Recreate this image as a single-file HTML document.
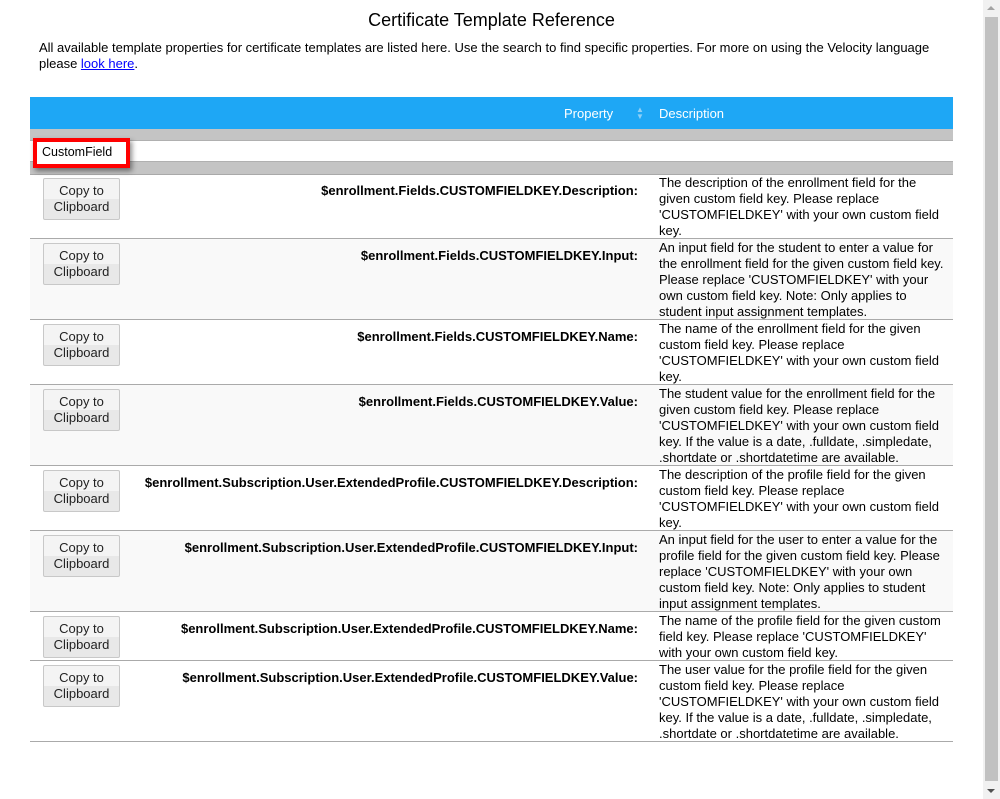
<!DOCTYPE html>
<html><head><meta charset="utf-8"><style>
body{margin:0;width:1000px;height:799px;overflow:hidden;background:#fff;font-family:"Liberation Sans",Arial,sans-serif;color:#000;position:relative}
.sb{position:absolute;left:983px;top:0;width:17px;height:799px;background:#f1f1f1}
.thumb{position:absolute;left:2px;top:17px;width:13px;height:764px;background:#c1c1c1}
.au{position:absolute;left:4px;top:6px;width:0;height:0;border-left:4px solid transparent;border-right:4px solid transparent;border-bottom:4px solid #a3a3a3}
.ad{position:absolute;left:4px;bottom:6px;width:0;height:0;border-left:4px solid transparent;border-right:4px solid transparent;border-top:4px solid #505050}
h1{position:absolute;left:0;width:983px;top:10px;margin:0;text-align:center;font-size:18px;font-weight:normal}
.intro{position:absolute;left:39px;top:40px;width:905px;font-size:13px;line-height:16px}
.intro a{color:#00f;text-decoration:underline}
.hdr{position:absolute;left:30px;top:97px;width:923px;height:32px;background:#1ea7f5;color:#fff;font-size:13px}
.g1{position:absolute;left:30px;top:129px;width:923px;height:11px;background:#c4c4c4;border-bottom:1px solid #b0b0b0}
.inrow{position:absolute;left:30px;top:141px;width:923px;height:20px;background:#fff}
.g2{position:absolute;left:30px;top:161px;width:923px;height:12px;background:#c4c4c4;border-top:1px solid #b0b0b0;border-bottom:1px solid #a9a9a9}
.sel{position:absolute;left:33px;top:138px;width:89px;height:22px;border:4px solid #f00;box-shadow:2px 3px 5px rgba(0,0,0,.45);background:#fff}
.sel span{position:absolute;left:5px;top:3px;font-size:12.5px}
.row{position:absolute;left:30px;width:923px;border-bottom:1px solid #aaa}
.alt{background:#f9f9f9}
.btn{position:absolute;left:13px;top:4px;border:1px solid #c8c8c8;border-radius:2px;background:linear-gradient(#f4f4f4 50%,#e8e8e8 50%);font-size:13px;line-height:16px;text-align:center;color:#222;padding-top:4px;box-sizing:border-box;height:42px;width:77px}
.prop{position:absolute;right:315px;top:9px;font-size:13px;font-weight:bold;white-space:nowrap;letter-spacing:0}
.desc{position:absolute;left:629px;top:1px;width:290px;font-size:13px;line-height:16px}
</style></head><body>
<h1>Certificate Template Reference</h1>
<div class="intro">All available template properties for certificate templates are listed here. Use the search to find specific properties. For more on using the Velocity language please <a>look here</a>.</div>
<div class="hdr"><span style="position:absolute;left:534px;top:9px">Property</span><span style="position:absolute;left:606px;top:9px;font-size:8px;line-height:7px;color:#8fd0f7">▲<br>▼</span><span style="position:absolute;left:629px;top:9px">Description</span></div>
<div class="g1"></div><div class="inrow"></div><div class="g2"></div>
<div class="sel"><span>CustomField</span></div>

<div class="row" style="top:174px;height:64px"><div class="btn">Copy to<br>Clipboard</div><div class="prop">$enrollment.Fields.CUSTOMFIELDKEY.Description:</div><div class="desc">The description of the enrollment field for the given custom field key. Please replace 'CUSTOMFIELDKEY' with your own custom field key.</div></div>
<div class="row alt" style="top:239px;height:80px"><div class="btn">Copy to<br>Clipboard</div><div class="prop">$enrollment.Fields.CUSTOMFIELDKEY.Input:</div><div class="desc">An input field for the student to enter a value for the enrollment field for the given custom field key. Please replace 'CUSTOMFIELDKEY' with your own custom field key. Note: Only applies to student input assignment templates.</div></div>
<div class="row" style="top:320px;height:64px"><div class="btn">Copy to<br>Clipboard</div><div class="prop">$enrollment.Fields.CUSTOMFIELDKEY.Name:</div><div class="desc">The name of the enrollment field for the given custom field key. Please replace 'CUSTOMFIELDKEY' with your own custom field key.</div></div>
<div class="row alt" style="top:385px;height:80px"><div class="btn">Copy to<br>Clipboard</div><div class="prop">$enrollment.Fields.CUSTOMFIELDKEY.Value:</div><div class="desc">The student value for the enrollment field for the given custom field key. Please replace 'CUSTOMFIELDKEY' with your own custom field key. If the value is a date, .fulldate, .simpledate, .shortdate or .shortdatetime are available.</div></div>
<div class="row" style="top:466px;height:64px"><div class="btn">Copy to<br>Clipboard</div><div class="prop">$enrollment.Subscription.User.ExtendedProfile.CUSTOMFIELDKEY.Description:</div><div class="desc">The description of the profile field for the given custom field key. Please replace 'CUSTOMFIELDKEY' with your own custom field key.</div></div>
<div class="row alt" style="top:531px;height:80px"><div class="btn">Copy to<br>Clipboard</div><div class="prop">$enrollment.Subscription.User.ExtendedProfile.CUSTOMFIELDKEY.Input:</div><div class="desc">An input field for the user to enter a value for the profile field for the given custom field key. Please replace 'CUSTOMFIELDKEY' with your own custom field key. Note: Only applies to student input assignment templates.</div></div>
<div class="row" style="top:612px;height:48px"><div class="btn">Copy to<br>Clipboard</div><div class="prop">$enrollment.Subscription.User.ExtendedProfile.CUSTOMFIELDKEY.Name:</div><div class="desc">The name of the profile field for the given custom field key. Please replace 'CUSTOMFIELDKEY' with your own custom field key.</div></div>
<div class="row" style="top:661px;height:80px"><div class="btn">Copy to<br>Clipboard</div><div class="prop">$enrollment.Subscription.User.ExtendedProfile.CUSTOMFIELDKEY.Value:</div><div class="desc">The user value for the profile field for the given custom field key. Please replace 'CUSTOMFIELDKEY' with your own custom field key. If the value is a date, .fulldate, .simpledate, .shortdate or .shortdatetime are available.</div></div>

<div class="sb"><div class="au"></div><div class="thumb"></div><div class="ad"></div></div>
</body></html>
